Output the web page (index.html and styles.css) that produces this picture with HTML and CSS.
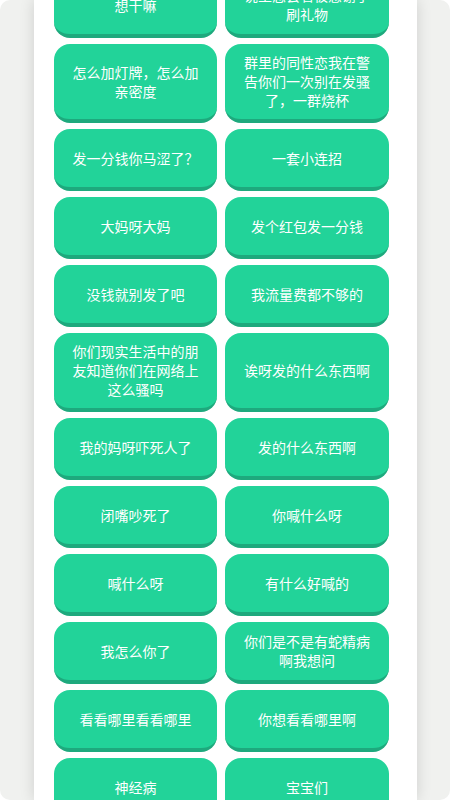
FILE: index.html
```html
<!DOCTYPE html>
<html lang="zh-CN">
<head>
<meta charset="utf-8">
<title>语音按钮</title>
<link rel="stylesheet" href="styles.css">
</head>
<body>
<div class="frame">
  <div class="sheet">
    <div class="grid">
      <div class="btn">想干嘛</div>
      <div class="btn">说主您会看被感谢了刷礼物</div>
      <div class="btn">怎么加灯牌，怎么加亲密度</div>
      <div class="btn">群里的同性恋我在警告你们一次别在发骚了，一群烧杯</div>
      <div class="btn">发一分钱你马涩了？</div>
      <div class="btn">一套小连招</div>
      <div class="btn">大妈呀大妈</div>
      <div class="btn">发个红包发一分钱</div>
      <div class="btn">没钱就别发了吧</div>
      <div class="btn">我流量费都不够的</div>
      <div class="btn">你们现实生活中的朋友知道你们在网络上这么骚吗</div>
      <div class="btn">诶呀发的什么东西啊</div>
      <div class="btn">我的妈呀吓死人了</div>
      <div class="btn">发的什么东西啊</div>
      <div class="btn">闭嘴吵死了</div>
      <div class="btn">你喊什么呀</div>
      <div class="btn">喊什么呀</div>
      <div class="btn">有什么好喊的</div>
      <div class="btn">我怎么你了</div>
      <div class="btn">你们是不是有蛇精病啊我想问</div>
      <div class="btn">看看哪里看看哪里</div>
      <div class="btn">你想看看哪里啊</div>
      <div class="btn">神经病</div>
      <div class="btn">宝宝们</div>
    </div>
  </div>
</div>
</body>
</html>
```

FILE: styles.css
```css
* { box-sizing: border-box; }
html, body {
  margin: 0;
  padding: 0;
  background: #ffffff;
}
.frame {
  width: 450px;
  height: 800px;
  background: #f0f1ef;
  border-radius: 10px;
  overflow: hidden;
  padding: 0 33px 0 34px;
}
.sheet {
  height: 800px;
  background: #ffffff;
  box-shadow: 0 0 14px rgba(0, 0, 0, 0.14);
  overflow: hidden;
  padding: 0 28px 0 20px;
}
.grid {
  margin-top: -24px;
  display: grid;
  grid-template-columns: 163px 164px;
  column-gap: 8px;
  row-gap: 6px;
}
.btn {
  min-height: 62px;
  padding: 9px 17px;
  background: #22d399;
  border-bottom: 4px solid #1ea97d;
  border-radius: 16px;
  display: flex;
  align-items: center;
  justify-content: center;
  text-align: center;
  color: #ffffff;
  font-family: "Noto Sans CJK SC", "Noto Sans", sans-serif;
  font-size: 14px;
  line-height: 19px;
}
```
